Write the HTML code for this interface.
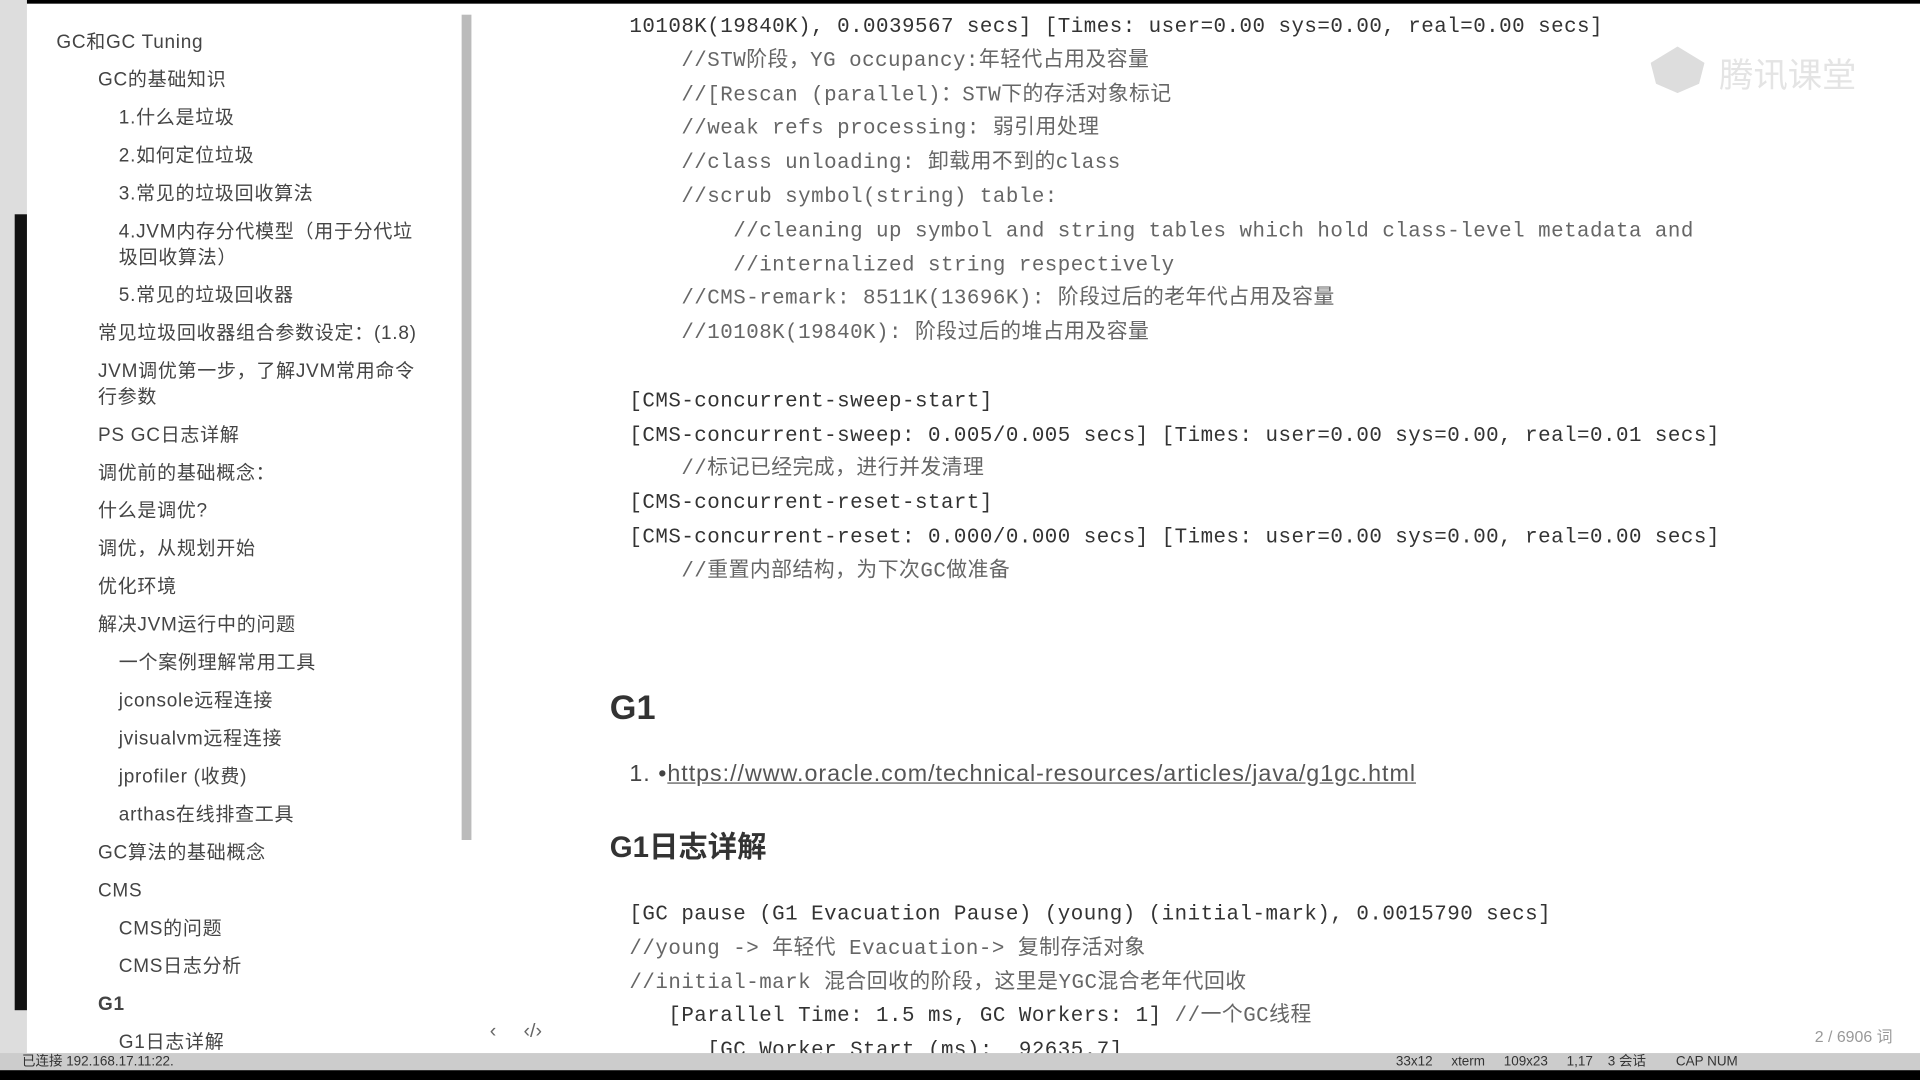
<!DOCTYPE html>
<html><head><meta charset="utf-8"><style>
html,body{margin:0;padding:0;width:1920px;height:1080px;overflow:hidden;background:#000}
#w{position:absolute;left:0;top:0;width:1568px;height:882px;transform:scale(1.22449);transform-origin:0 0;background:#fff;font-family:"Liberation Sans","Noto Sans CJK SC",sans-serif}
.abs{position:absolute}
.side a{position:absolute;color:#444;font-size:15.5px;line-height:20px;white-space:nowrap;text-decoration:none;letter-spacing:0.6px;margin-top:2px}
.code{position:absolute;font-family:"Liberation Mono","Noto Sans CJK SC",monospace;font-size:17px;color:#333;white-space:pre;letter-spacing:0.4px}
.c{color:#666}
</style></head><body><div id="w">
<div class="abs" style="left:0;top:0;width:1568px;height:3px;background:#000"></div>
<div class="abs" style="left:0;top:0;width:22px;height:882px;background:#ddd"></div>
<div class="abs" style="left:12px;top:175px;width:10px;height:650px;background:#111"></div>
<div class="abs" style="left:377px;top:12px;width:8px;height:674px;background:#bbb"></div>
<div class="side">
<a style="left:46px;top:23px">GC和GC Tuning</a>
<a style="left:80px;top:54px">GC的基础知识</a>
<a style="left:97px;top:85px">1.什么是垃圾</a>
<a style="left:97px;top:116px">2.如何定位垃圾</a>
<a style="left:97px;top:147px">3.常见的垃圾回收算法</a>
<a style="left:97px;top:178px">4.JVM内存分代模型（用于分代垃</a>
<a style="left:97px;top:199px">圾回收算法）</a>
<a style="left:97px;top:230px">5.常见的垃圾回收器</a>
<a style="left:80px;top:261px">常见垃圾回收器组合参数设定：(1.8)</a>
<a style="left:80px;top:292px">JVM调优第一步，了解JVM常用命令</a>
<a style="left:80px;top:313px">行参数</a>
<a style="left:80px;top:344px">PS GC日志详解</a>
<a style="left:80px;top:375px">调优前的基础概念：</a>
<a style="left:80px;top:406px">什么是调优?</a>
<a style="left:80px;top:437px">调优，从规划开始</a>
<a style="left:80px;top:468px">优化环境</a>
<a style="left:80px;top:499px">解决JVM运行中的问题</a>
<a style="left:97px;top:530px">一个案例理解常用工具</a>
<a style="left:97px;top:561px">jconsole远程连接</a>
<a style="left:97px;top:592px">jvisualvm远程连接</a>
<a style="left:97px;top:623px">jprofiler (收费)</a>
<a style="left:97px;top:654px">arthas在线排查工具</a>
<a style="left:80px;top:685px">GC算法的基础概念</a>
<a style="left:80px;top:716px">CMS</a>
<a style="left:97px;top:747px">CMS的问题</a>
<a style="left:97px;top:778px">CMS日志分析</a>
<a style="left:80px;top:809px;font-weight:bold">G1</a>
<a style="left:97px;top:840px">G1日志详解</a>
</div>
<div class="code" style="left:514px;top:9px;line-height:27.8px">10108K(19840K), 0.0039567 secs] [Times: user=0.00 sys=0.00, real=0.00 secs]
<span class="c">    //STW阶段，YG occupancy:年轻代占用及容量
    //[Rescan (parallel)：STW下的存活对象标记
    //weak refs processing: 弱引用处理
    //class unloading: 卸载用不到的class
    //scrub symbol(string) table:
        //cleaning up symbol and string tables which hold class-level metadata and
        //internalized string respectively
    //CMS-remark: 8511K(13696K): 阶段过后的老年代占用及容量
    //10108K(19840K): 阶段过后的堆占用及容量</span>

[CMS-concurrent-sweep-start]
[CMS-concurrent-sweep: 0.005/0.005 secs] [Times: user=0.00 sys=0.00, real=0.01 secs]
<span class="c">    //标记已经完成，进行并发清理</span>
[CMS-concurrent-reset-start]
[CMS-concurrent-reset: 0.000/0.000 secs] [Times: user=0.00 sys=0.00, real=0.00 secs]
<span class="c">    //重置内部结构，为下次GC做准备</span></div>
<div class="abs" style="left:498px;top:562px;font-size:28px;font-weight:bold;color:#333">G1</div>
<div class="abs" style="left:514px;top:622px;font-size:19px;color:#444;letter-spacing:0.8px">1. •<span style="color:#555;text-decoration:underline">https://www.oracle.com/technical-resources/articles/java/g1gc.html</span></div>
<div class="abs" style="left:498px;top:672px;font-size:24px;font-weight:bold;color:#333">G1日志详解</div>
<div class="code" style="left:514px;top:734px;line-height:27.8px">[GC pause (G1 Evacuation Pause) (young) (initial-mark), 0.0015790 secs]
<span class="c">//young -> 年轻代 Evacuation-> 复制存活对象
//initial-mark 混合回收的阶段，这里是YGC混合老年代回收</span>
   [Parallel Time: 1.5 ms, GC Workers: 1] <span class="c">//一个GC线程</span>
      [GC Worker Start (ms):  92635.7]</div>
<div class="abs" style="left:1348px;top:38px;width:44px;height:38px;background:#ddd;clip-path:polygon(50% 0,100% 35%,90% 80%,50% 100%,10% 80%,0 35%)"></div>
<div class="abs" style="left:1404px;top:40px;font-size:28px;color:#e4e4e4">腾讯课堂</div>
<div class="abs" style="left:400px;top:834px;font-size:16px;color:#666">‹&nbsp;&nbsp;&nbsp;&nbsp;&nbsp;‹/›</div>
<div class="abs" style="left:1482px;top:836px;font-size:13px;color:#999">2 / 6906 词</div>
<div class="abs" style="left:0;top:860px;width:1568px;height:14px;background:#ccc;font-size:11px;color:#333;line-height:14px;padding-left:18px;box-sizing:border-box">已连接 192.168.17.11:22.<span style="position:absolute;left:1140px">33x12&nbsp;&nbsp;&nbsp;&nbsp;&nbsp;xterm&nbsp;&nbsp;&nbsp;&nbsp;&nbsp;109x23&nbsp;&nbsp;&nbsp;&nbsp;&nbsp;1,17&nbsp;&nbsp;&nbsp;&nbsp;3 会话&nbsp;&nbsp;&nbsp;&nbsp;&nbsp;&nbsp;&nbsp;&nbsp;CAP NUM</span></div>
<div class="abs" style="left:0;top:874px;width:1568px;height:8px;background:#000"></div>
</div></body></html>
